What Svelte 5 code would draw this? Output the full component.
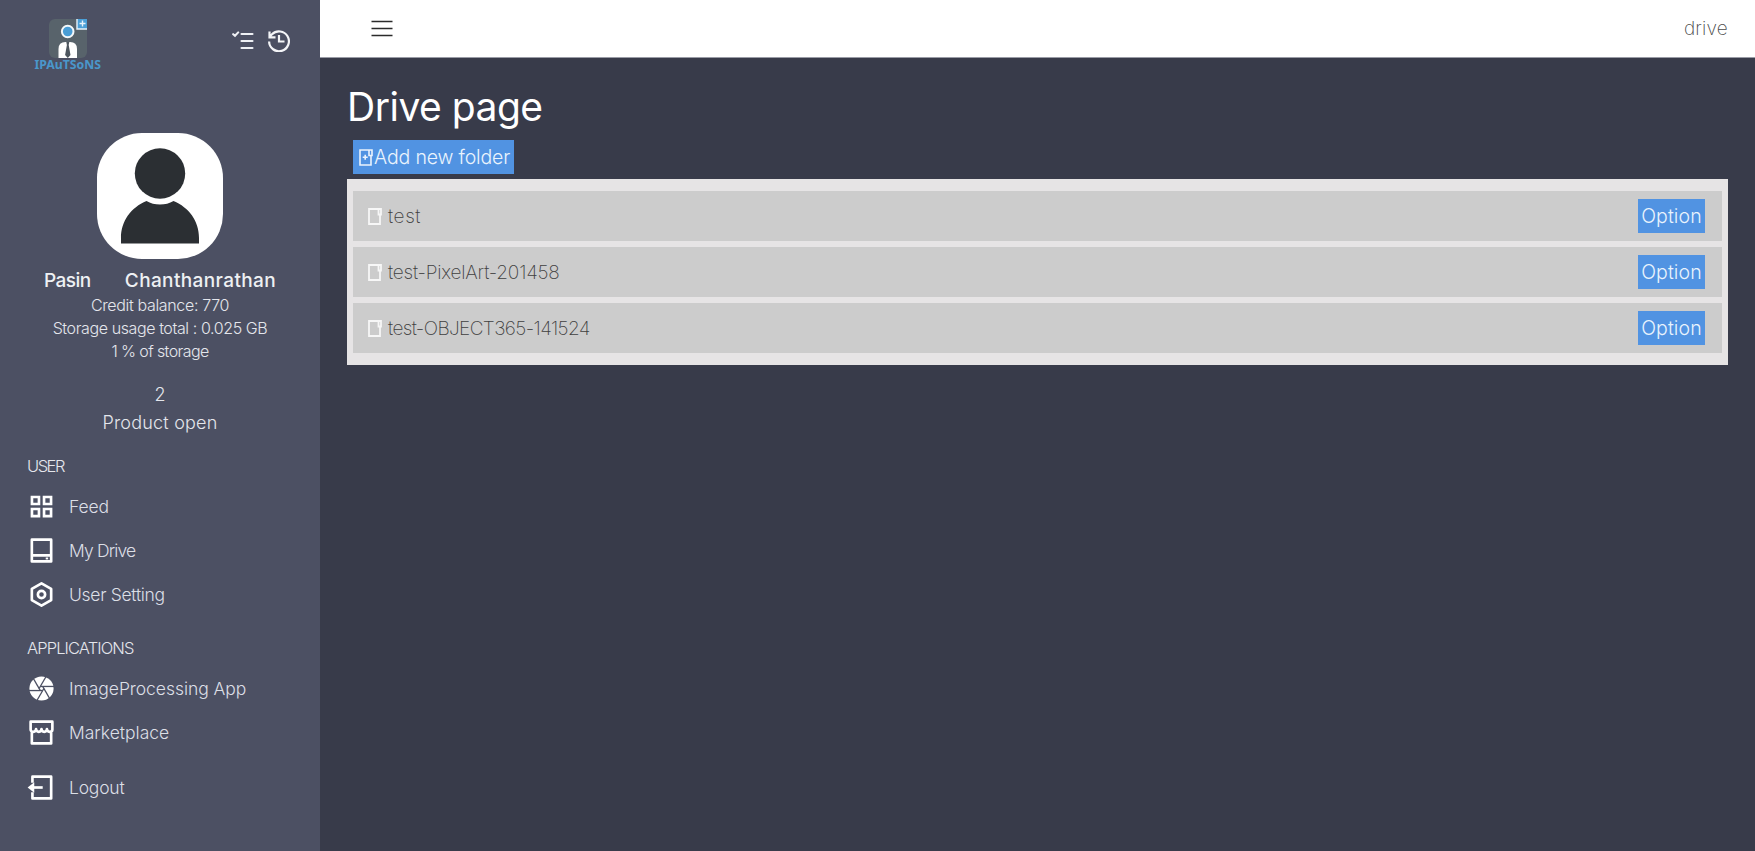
<script>
  const userLinks = [
    { label: 'Feed', icon: 'grid', cls: 't-feed' },
    { label: 'My Drive', icon: 'drive', cls: 't-drive' },
    { label: 'User Setting', icon: 'hex', cls: 't-setting' }
  ];
  const appLinks = [
    { label: 'ImageProcessing App', icon: 'shutter', cls: 't-image' },
    { label: 'Marketplace', icon: 'store', cls: 't-market' }
  ];
  const folders = [
    { name: 'test', cls: 't-f1' },
    { name: 'test-PixelArt-201458', cls: 't-f2' },
    { name: 'test-OBJECT365-141524', cls: 't-f3' }
  ];
  const blades = [0, 60, 120, 180, 240, 300];
</script>

{#snippet icon(name)}
  <svg class="icon" viewBox="0 0 24 24" fill="none" stroke="currentColor" stroke-width="2.2" stroke-linejoin="round">
    {#if name === 'grid'}
      <path stroke-linejoin="miter" d="M4.100 4.100h5.800v5.800H4.100zM14.100 4.100h5.800v5.800h-5.800zM4.100 14.100h5.800v5.800H4.100zM14.100 14.100h5.800v5.800h-5.800z" />
    {:else if name === 'drive'}
      <path d="M4 3h16v18H4zM4 16h16" /><path d="M15.500 18.600h2" stroke-width="1.600" />
    {:else if name === 'hex'}
      <path d="M12 2.800l8 4.600v9.200l-8 4.600-8-4.600V7.400z" /><circle cx="12" cy="12" r="3" />
    {:else if name === 'shutter'}
      <circle cx="12" cy="12" r="10" fill="currentColor" stroke="none" />
      {#each blades as angle}
        <path class="slit" d="M11 10.300H23" transform="rotate({angle} 12 12)" />
      {/each}
    {:else if name === 'store'}
      <path d="M3 3h18v6.500c0 1-.8 2-2.200 2-1.500 0-2.300-.9-2.300-2.300 0 1.400-.9 2.300-2.250 2.300S12 10.600 12 9.200c0 1.400-.9 2.300-2.250 2.300S7.500 10.600 7.500 9.200c0 1.400-.8 2.300-2.300 2.300-1.400 0-2.200-1-2.200-2zM4 11.500V21h16v-9.500" />
    {:else if name === 'logout'}
      <path d="M4.500 8V3H20v18H4.500v-5" /><path d="M5 12h8" /><path fill="currentColor" stroke="none" d="M0.500 12L6 7.600v8.800z" />
    {/if}
  </svg>
{/snippet}

<div class="page">
  <aside>
    <div class="brand-row">
      <svg class="logo" width="72" height="60" viewBox="0 0 72 60">
        <rect x="15" y="1" width="38" height="39" rx="6" fill="#58636b" />
        <rect x="43" y="1" width="10" height="10" fill="#4b9fd6" />
        <path d="M43 1v10h10M48.500 2.500v6M45.500 5.500h6" stroke="#e8f3fa" stroke-width="1.400" fill="none" />
        <circle cx="33.700" cy="13.500" r="5.800" fill="#4a9ed6" stroke="#f4f8fa" stroke-width="2" />
        <path d="M24.500 40v-9q0-7 7-7h4.500q7 0 7 7v9z" fill="#fff" />
        <path d="M32.300 24h3l-.6 3 1.800 10-2.700 3-2.700-3 1.800-10z" fill="#4d565e" />
        <text x="0.500" y="50.500" textLength="66.500" lengthAdjust="spacingAndGlyphs">IPAuTSoNS</text>
      </svg>
      <div class="tools">
        <svg width="22" height="20" viewBox="0 0 22 20" fill="none" stroke="#eef0f4" stroke-width="2.100" stroke-linecap="round">
          <path d="M9.500 3h11M9.500 10h11M9.500 17h11M1.200 3.200l1.800 1.600 3.200-3.400" />
        </svg>
        <svg width="22" height="22" viewBox="0 0 22 22" fill="none" stroke="#f4f5f8" stroke-width="2.200">
          <path d="M1.100 11.500A9.900 9.900 0 1 0 4 4.300L1.500 6.800M1.500 1.500v5.800h6M11 5v6.500h5.500" />
        </svg>
      </div>
    </div>

    <div class="profile">
      <svg class="avatar" width="126" height="126" viewBox="0 0 126 126">
        <rect width="126" height="126" rx="45" fill="#fff" />
        <circle cx="63" cy="40.500" r="25.200" fill="#2b2f33" />
        <path d="M24 110.500V105c0-17 10-30.500 25.500-37q6 3.500 13.500 3.500T76.500 68C92 74.500 102 88 102 105v5.500z" fill="#2b2f33" />
      </svg>
      <div class="name"><span class="t t-first">Pasin</span><span class="t t-last">Chanthanrathan</span></div>
      <div class="meta"><span class="t t-credit">Credit balance: 770</span></div>
      <div class="meta"><span class="t t-storage">Storage usage total : 0.025 GB</span></div>
      <div class="meta"><span class="t t-percent">1 % of storage</span></div>
      <div class="count"><span class="t">2</span></div>
      <div class="count-label"><span class="t t-open">Product open</span></div>
    </div>

    <nav>
      <h2><span class="t t-user">USER</span></h2>
      {#each userLinks as l}
        <a href="#top">{@render icon(l.icon)}<span class="t {l.cls}">{l.label}</span></a>
      {/each}
      <h2 class="apps"><span class="t t-apps">APPLICATIONS</span></h2>
      {#each appLinks as l}
        <a href="#top">{@render icon(l.icon)}<span class="t {l.cls}">{l.label}</span></a>
      {/each}
      <a class="logout" href="#top">{@render icon('logout')}<span class="t t-logout">Logout</span></a>
    </nav>
  </aside>

  <main>
    <header>
      <svg width="22" height="18" viewBox="0 0 22 18" stroke="#2b2b2b" stroke-width="1.700">
        <path d="M0.500 1.500h21M0.500 8.500h21M0.500 15.500h21" />
      </svg>
      <span class="t t-crumb">drive</span>
    </header>
    <div class="content">
      <h1><span class="t t-title">Drive page</span></h1>
      <button class="add">
        <svg width="14" height="17" viewBox="0 0 14 17" fill="none" stroke="currentColor" stroke-width="1.600">
          <path d="M1 1h12v5.500h-1V16H1zM10 1v5.500h2M6.200 5.700v5M3.700 8.200h5" />
        </svg><span class="t t-add">Add new folder</span>
      </button>
      <div class="list">
        {#each folders as f}
          <div class="row">
            <svg width="14" height="17" viewBox="0 0 14 17" fill="none" stroke="#f7f7f7" stroke-width="1.800">
              <path d="M1 1h12v5.500h-1V16H1zM10.500 1v5.500H12" />
            </svg>
            <span class="t label {f.cls}">{f.name}</span>
            <button><span class="t t-option">Option</span></button>
          </div>
        {/each}
      </div>
    </div>
  </main>
</div>

<style>
  :global(body) { background: #383b4a; }
  .page {
    display: flex;
    height: 851px;
    overflow: hidden;
    font-family: Inter, "Open Sans", sans-serif;
    font-weight: 300;
    color: #e4e6ec;
  }
  .t { white-space: nowrap; }
  .t-first { letter-spacing: -0.5px; }
  .t-last { letter-spacing: 0.38px; }
  .t-credit { letter-spacing: -0.34px; }
  .t-storage { letter-spacing: -0.4px; }
  .t-percent { letter-spacing: -0.6px; }
  .t-open { letter-spacing: 0.2px; }
  .t-user { letter-spacing: -1.5px; }
  .t-apps { letter-spacing: -0.9px; }
  .t-feed { letter-spacing: -0.1px; }
  .t-drive { letter-spacing: -0.85px; }
  .t-setting { letter-spacing: -0.3px; }
  .t-image { letter-spacing: -0.05px; }
  .t-logout { letter-spacing: -0.2px; }
  .t-crumb { letter-spacing: 0.2px; }
  .t-title { letter-spacing: -0.5px; }
  .t-add { letter-spacing: -0.15px; }
  .t-f1 { letter-spacing: 0.6px; }
  .t-f2 { letter-spacing: -0.2px; }
  .t-f3 { letter-spacing: -0.61px; }
  .t-option { letter-spacing: 0.1px; }

  aside { flex: 0 0 320px; background: #4c5063; display: flex; flex-direction: column; }
  .brand-row { display: flex; justify-content: space-between; padding: 18px 30px 0 34px; height: 115px; box-sizing: border-box; }
  .logo text { font: 700 13px "Noto Sans", sans-serif; fill: #4a97cb; }
  .tools { display: flex; gap: 14px; align-items: center; height: 45px; }

  .profile { display: flex; flex-direction: column; align-items: center; padding-top: 18px; text-align: center; }
  .avatar { display: block; }
  .name { display: flex; gap: 34px; font-size: 19px; font-weight: 500; line-height: 24px; height: 33px; padding-top: 10px; box-sizing: border-box; color: #eef0f3; }
  .meta { font-size: 16px; line-height: 23px; }
  .name + .meta { padding-top: 2px; }
  .count { font-size: 18px; line-height: 28px; padding-top: 18px; }
  .count-label { font-size: 18px; line-height: 28px; }

  nav { padding: 11px 0 0 27px; }
  h2 { margin: 0; font-size: 16.5px; line-height: 28px; font-weight: 300; height: 36px; padding-top: 4px; box-sizing: border-box; }
  h2.apps { height: 50px; padding-top: 18px; }
  nav a { display: flex; align-items: center; height: 44px; gap: 13.5px; margin-left: -0.5px; color: #dcdfe6; text-decoration: none; font-size: 17.5px; }
  nav a.logout { margin-top: 11px; }
  .icon { width: 29px; height: 29px; color: #fff; flex: none; }
  .slit { stroke: #4c5063; stroke-width: 1.1; }

  main { flex: 1; display: flex; flex-direction: column; background: #383b4a; min-width: 0; }
  header { height: 58px; box-sizing: border-box; border-bottom: 1px solid #9a9ca6; background: #fff; display: flex; align-items: center; justify-content: space-between; padding: 0 27px 0 51px; color: #4a4a4a; font-size: 19px; font-weight: 250; }
  .content { padding: 24px 27px 0; }
  h1 { margin: 0; font-size: 39px; line-height: 50px; height: 58px; font-weight: 380; color: #fff; }
  button { display: flex; align-items: center; justify-content: center; font: inherit; border: 0; border-radius: 0; background: #5193e2; color: #eaf3fd; height: 34px; padding: 0; font-size: 19.5px; font-weight: 275; }
  .add { width: 161px; margin-left: 6px; justify-content: flex-start; padding-left: 6px; gap: 1px; }
  .list { margin-top: 5px; background: #e6e4e5; padding: 12px 6px; display: flex; flex-direction: column; gap: 6px; }
  .row { height: 50px; background: #ccc; display: flex; align-items: center; padding: 0 17px 0 15px; gap: 6px; color: #3f3f3f; font-size: 19px; font-weight: 250; }
  .label { flex: none; }
  .row button { width: 67px; margin-left: auto; }
</style>
